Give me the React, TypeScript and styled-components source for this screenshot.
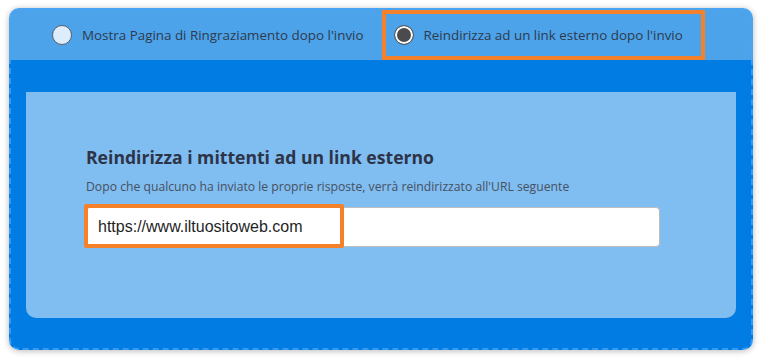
import styled, { createGlobalStyle } from "styled-components"

const GlobalStyle = createGlobalStyle`
  body {
    margin: 0;
    background: #ffffff;
    font-family: "Open Sans", "Noto Sans", sans-serif;
  }
`

const Page = styled.div`
  padding: 8px 10px 10px 9px;
`

const Card = styled.div`
  width: 744px;
  height: 342px;
  box-sizing: border-box;
  border: 2px dashed rgba(70, 165, 250, 0.75);
  border-radius: 10px;
  background: linear-gradient(#4ca3ea 0, #4ca3ea 52px, #007ce2 52px);
  background-origin: border-box;
  box-shadow: 0 1px 6px rgba(0, 0, 0, 0.28);
  display: flex;
  flex-direction: column;
  overflow: hidden;
`

const TopBar = styled.div`
  height: 50px;
  display: flex;
  align-items: stretch;
  gap: 18px;
  padding-left: 41px;
`

const Option = styled.label<{ $highlight?: boolean }>`
  display: flex;
  align-items: center;
  gap: 10px;
  box-sizing: border-box;
  font-size: 13.4px;
  color: #2f3a4c;
  cursor: pointer;
  ${(p) =>
    p.$highlight
      ? `border: 4px solid #f5822a; padding: 0 18px 0 8px;`
      : `padding: 0;`}
`

const Radio = styled.span<{ $checked?: boolean }>`
  width: 20px;
  height: 20px;
  box-sizing: border-box;
  border-radius: 50%;
  border: 1.5px solid #5b5f66;
  background: ${(p) => (p.$checked ? "#4b4b4d" : "#deedfb")};
  box-shadow: ${(p) => (p.$checked ? "inset 0 0 0 2px #ffffff" : "none")};
  flex-shrink: 0;
`

const Body = styled.div`
  flex: 1;
  padding: 32px 15px 30px 15px;
  display: flex;
`

const Panel = styled.div`
  flex: 1;
  background: #80bdf1;
  border-radius: 0 0 10px 10px;
  padding: 53px 60px 0 60px;
`

const Heading = styled.h2`
  margin: 0;
  font-size: 17.6px;
  font-weight: 700;
  line-height: 24px;
  color: #2d3448;
`

const Subtitle = styled.p`
  margin: 10px 0 0 0;
  font-size: 12.2px;
  line-height: 16px;
  color: #47505e;
`

const InputWrap = styled.div`
  position: relative;
  width: 574px;
  margin-top: 12px;
`

const UrlInput = styled.input`
  display: block;
  width: 100%;
  height: 40px;
  box-sizing: border-box;
  border: 1px solid #bdbdbd;
  border-radius: 4px;
  background: #ffffff;
  padding: 0 11px;
  font-family: "Liberation Sans", Arial, sans-serif;
  font-size: 16px;
  color: #1f1f1f;
  outline: none;
`

const Highlight = styled.div`
  position: absolute;
  left: -2px;
  top: -3px;
  width: 260px;
  height: 44px;
  box-sizing: border-box;
  border: 4px solid #f5822a;
  border-radius: 2px;
  pointer-events: none;
`

export default function App() {
  return (
    <Page>
      <GlobalStyle />
      <Card>
        <TopBar>
          <Option>
            <Radio />
            Mostra Pagina di Ringraziamento dopo l'invio
          </Option>
          <Option $highlight>
            <Radio $checked />
            Reindirizza ad un link esterno dopo l'invio
          </Option>
        </TopBar>
        <Body>
          <Panel>
            <Heading>Reindirizza i mittenti ad un link esterno</Heading>
            <Subtitle>
              Dopo che qualcuno ha inviato le proprie risposte, verrà reindirizzato all'URL seguente
            </Subtitle>
            <InputWrap>
              <UrlInput defaultValue="https://www.iltuositoweb.com" readOnly />
              <Highlight />
            </InputWrap>
          </Panel>
        </Body>
      </Card>
    </Page>
  )
}
